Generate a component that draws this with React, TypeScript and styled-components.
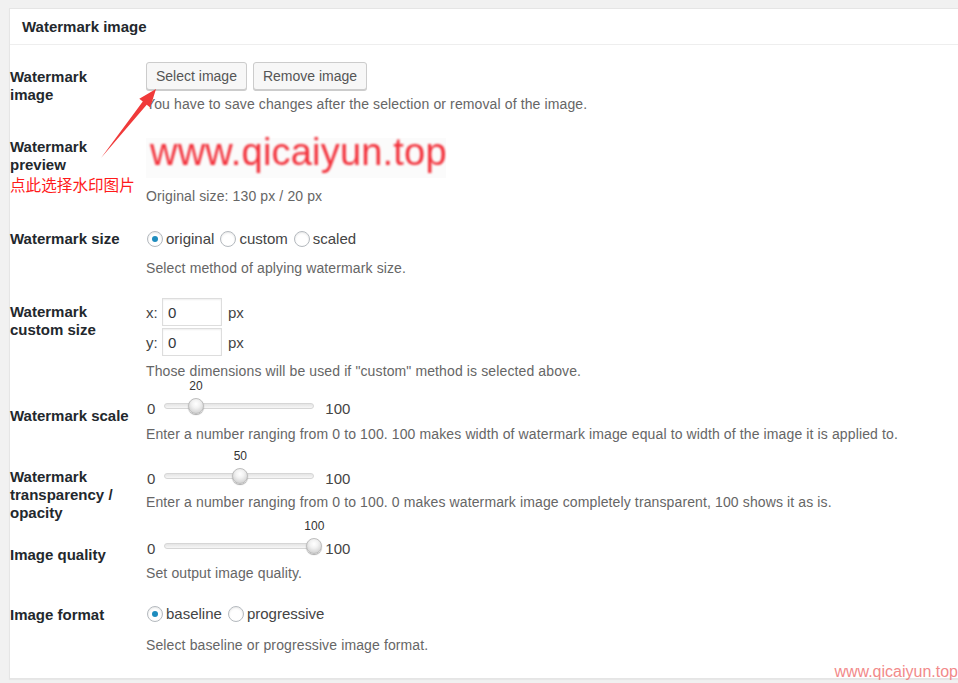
import styled, { createGlobalStyle } from "styled-components"

const GlobalStyle = createGlobalStyle`
  html, body {
    margin: 0;
    padding: 0;
  }
  body {
    background: #f1f1f1;
    font-family: "Liberation Sans", Arial, sans-serif;
    overflow: hidden;
  }
`

const Page = styled.div`
  position: relative;
  width: 958px;
  height: 683px;
  padding: 8px 0 0 9px;
  box-sizing: border-box;
  overflow: hidden;
`

const Panel = styled.div`
  width: 960px;
  background: #fff;
  border: 1px solid #e5e5e5;
  border-right: 0;
  box-shadow: 0 1px 1px rgba(0, 0, 0, 0.04);
`

const PanelHeader = styled.h2`
  margin: 0;
  padding: 8px 12px 7px;
  font-size: 15px;
  line-height: 20px;
  font-weight: 700;
  color: #23282d;
  border-bottom: 1px solid #eee;
`

const PanelBody = styled.div`
  padding-bottom: 24px;
`

const Row = styled.div`
  display: grid;
  grid-template-columns: 136px 1fr;
  align-items: start;
`

const Label = styled.div<{ $top: number }>`
  padding-top: ${p => p.$top}px;
  font-size: 15px;
  line-height: 18px;
  font-weight: 700;
  color: #23282d;
`

const Note = styled.span`
  display: block;
  font-family: "Noto Sans CJK SC", sans-serif;
  font-weight: 400;
  font-size: 15.6px;
  line-height: 20px;
  color: #ff1a1a;
`

const Field = styled.div<{ $top: number }>`
  padding-top: ${p => p.$top}px;
  font-size: 15px;
  color: #444;
`

const Desc = styled.p<{ $gap: number }>`
  margin: ${p => p.$gap}px 0 0;
  font-size: 14px;
  line-height: 18px;
  letter-spacing: 0.12px;
  color: #666;
`

const Buttons = styled.div`
  display: flex;
  gap: 6px;
`

const Button = styled.button`
  height: 28px;
  padding: 0 9px;
  font-family: inherit;
  font-size: 14px;
  color: #555;
  background: #f7f7f7;
  border: 1px solid #ccc;
  border-radius: 3px;
  box-shadow: 0 1px 0 #ccc;
  cursor: pointer;
`

const Preview = styled.div`
  width: 300px;
  height: 40px;
  padding-left: 4px;
  box-sizing: border-box;
  background: #fbfbfb;
`

const PreviewText = styled.span`
  display: block;
  font-size: 38px;
  line-height: 29px;
  letter-spacing: 0.2px;
  color: #f2303a;
  filter: blur(0.8px);
  white-space: nowrap;
`

const RadioLine = styled.div`
  display: flex;
  align-items: center;
  height: 20px;
`

const RadioItem = styled.label`
  display: flex;
  align-items: center;
  margin-right: 5px;
  line-height: 20px;
`

const Radio = styled.span<{ $on?: boolean }>`
  position: relative;
  width: 16px;
  height: 16px;
  margin: 0 3px 0 1px;
  box-sizing: border-box;
  border: 1px solid #b4b9be;
  border-radius: 50%;
  background: #fff;
  box-shadow: inset 0 1px 2px rgba(0, 0, 0, 0.1);

  &::after {
    content: "";
    display: ${p => (p.$on ? "block" : "none")};
    position: absolute;
    left: 4px;
    top: 4px;
    width: 6px;
    height: 6px;
    border-radius: 50%;
    background: #1e8cbe;
  }
`

const SizeLine = styled.div`
  display: flex;
  align-items: center;
  height: 28px;
  margin-bottom: 2px;
`

const Axis = styled.span`
  width: 16px;
`

const SizeInput = styled.input`
  width: 60px;
  height: 28px;
  margin-right: 6px;
  padding: 0 5px;
  box-sizing: border-box;
  font-family: inherit;
  font-size: 15px;
  color: #32373c;
  border: 1px solid #ddd;
  box-shadow: inset 0 1px 2px rgba(0, 0, 0, 0.07);
  outline: none;
`

const SliderLine = styled.div`
  display: flex;
  align-items: center;
  height: 20px;
  line-height: 20px;
`

const MinLabel = styled.span`
  margin: 0 9px 0 1px;
`

const MaxLabel = styled.span`
  margin-left: 11px;
`

const Track = styled.div`
  position: relative;
  top: -3px;
  width: 150px;
  height: 6px;
  box-sizing: border-box;
  border: 1px solid #d6d6d6;
  border-radius: 4px;
  background: linear-gradient(#e4e4e4, #f6f6f6);
`

const Thumb = styled.span`
  position: absolute;
  top: 50%;
  width: 16px;
  height: 16px;
  margin: -8px 0 0 -7px;
  box-sizing: border-box;
  border: 1px solid #bdbdbd;
  border-radius: 50%;
  background: radial-gradient(circle at 50% 35%, #ffffff 0%, #f2f2f2 35%, #d2d2d2 80%, #b8b8b8 100%);
  box-shadow: 0 1px 1px rgba(0, 0, 0, 0.35);
`

const ThumbValue = styled.span`
  position: absolute;
  left: 50%;
  bottom: calc(100% + 6px);
  transform: translateX(-50%);
  font-size: 12px;
  line-height: 14px;
  color: #333;
`

const Arrow = styled.svg`
  position: absolute;
  left: 0;
  top: 0;
  pointer-events: none;
`

const SiteMark = styled.span`
  position: absolute;
  right: 0;
  top: 663px;
  font-size: 16px;
  line-height: 18px;
  color: #f28a8a;
`

const Slider = ({ value }: { value: number }) => (
  <SliderLine>
    <MinLabel>0</MinLabel>
    <Track>
      <Thumb style={{ left: `${value}%` }}>
        <ThumbValue>{value}</ThumbValue>
      </Thumb>
    </Track>
    <MaxLabel>100</MaxLabel>
  </SliderLine>
)

const RadioGroup = ({ options, selected }: { options: string[]; selected: string }) => (
  <RadioLine>
    {options.map(o => (
      <RadioItem key={o}>
        <Radio $on={o === selected} />
        {o}
      </RadioItem>
    ))}
  </RadioLine>
)

const App = () => {
  return (
    <>
      <GlobalStyle />
      <Page>
        <Panel>
          <PanelHeader>Watermark image</PanelHeader>
          <PanelBody>
            <Row>
              <Label $top={23}>Watermark<br />image</Label>
              <Field $top={17}>
                <Buttons>
                  <Button>Select image</Button>
                  <Button>Remove image</Button>
                </Buttons>
                <Desc $gap={5}>You have to save changes after the selection or removal of the image.</Desc>
              </Field>
            </Row>
            <Row>
              <Label $top={25}>
                Watermark<br />preview
                <Note>点此选择水印图片</Note>
              </Label>
              <Field $top={25}>
                <Preview>
                  <PreviewText>www.qicaiyun.top</PreviewText>
                </Preview>
                <Desc $gap={9}>Original size: 130 px / 20 px</Desc>
              </Field>
            </Row>
            <Row>
              <Label $top={25}>Watermark size</Label>
              <Field $top={24}>
                <RadioGroup options={["original", "custom", "scaled"]} selected="original" />
                <Desc $gap={10}>Select method of aplying watermark size.</Desc>
              </Field>
            </Row>
            <Row>
              <Label $top={26}>Watermark<br />custom size</Label>
              <Field $top={21}>
                <SizeLine>
                  <Axis>x:</Axis>
                  <SizeInput defaultValue="0" />
                  px
                </SizeLine>
                <SizeLine>
                  <Axis>y:</Axis>
                  <SizeInput defaultValue="0" />
                  px
                </SizeLine>
                <Desc $gap={6}>Those dimensions will be used if "custom" method is selected above.</Desc>
              </Field>
            </Row>
            <Row>
              <Label $top={27}>Watermark scale</Label>
              <Field $top={19}>
                <Slider value={20} />
                <Desc $gap={6}>Enter a number ranging from 0 to 100. 100 makes width of watermark image equal to width of the image it is applied to.</Desc>
              </Field>
            </Row>
            <Row>
              <Label $top={25}>Watermark<br />transparency /<br />opacity</Label>
              <Field $top={26}>
                <Slider value={50} />
                <Desc $gap={4}>Enter a number ranging from 0 to 100. 0 makes watermark image completely transparent, 100 shows it as is.</Desc>
              </Field>
            </Row>
            <Row>
              <Label $top={24}>Image quality</Label>
              <Field $top={17}>
                <Slider value={100} />
                <Desc $gap={5}>Set output image quality.</Desc>
              </Field>
            </Row>
            <Row>
              <Label $top={24}>Image format</Label>
              <Field $top={22}>
                <RadioGroup options={["baseline", "progressive"]} selected="baseline" />
                <Desc $gap={12}>Select baseline or progressive image format.</Desc>
              </Field>
            </Row>
          </PanelBody>
        </Panel>
        <Arrow width="200" height="200" viewBox="0 0 200 200">
          <polygon
            points="156,89 139.3,98.7 142.8,101.5 101,158 146.7,104.7 150.2,107.5"
            fill="#f03a3a"
          />
        </Arrow>
        <SiteMark>www.qicaiyun.top</SiteMark>
      </Page>
    </>
  )
}

export default App
